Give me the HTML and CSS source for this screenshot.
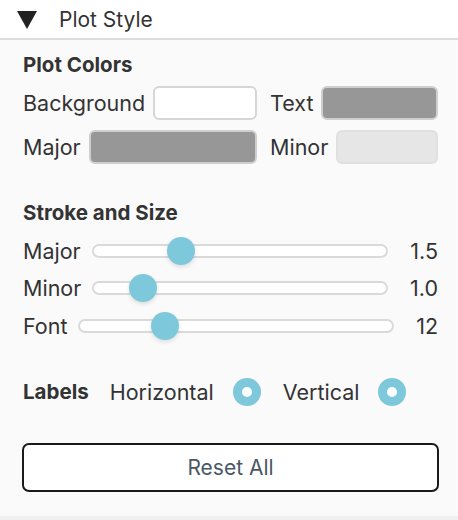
FILE: index.html
```html
<!DOCTYPE html>
<html>
<head>
<meta charset="utf-8">
<link rel="stylesheet" href="styles.css">
</head>
<body>
<div class="header">
  <svg class="tri" width="20" height="18" viewBox="0 0 20 18"><polygon points="0,0 20,0 10,18" fill="#222"/></svg>
  <span class="title">Plot Style</span>
</div>
<div class="panel">
  <div class="section-title">Plot Colors</div>
  <div class="color-grid">
    <div class="cell"><span class="lbl">Background</span><span class="swatch white"></span></div>
    <div class="cell"><span class="lbl">Text</span><span class="swatch gray"></span></div>
    <div class="cell"><span class="lbl">Major</span><span class="swatch gray"></span></div>
    <div class="cell"><span class="lbl">Minor</span><span class="swatch light"></span></div>
  </div>

  <div class="section-title st2">Stroke and Size</div>
  <div class="sliders">
    <div class="slider-row">
      <span class="lbl">Major</span>
      <div class="track"><span class="thumb" style="left:30%"></span></div>
      <span class="val">1.5</span>
    </div>
    <div class="slider-row">
      <span class="lbl">Minor</span>
      <div class="track"><span class="thumb" style="left:16.8%"></span></div>
      <span class="val">1.0</span>
    </div>
    <div class="slider-row">
      <span class="lbl">Font</span>
      <div class="track"><span class="thumb" style="left:27.2%"></span></div>
      <span class="val">12</span>
    </div>
  </div>

  <div class="labels-row">
    <span class="bold">Labels</span>
    <span class="lbl h">Horizontal</span>
    <span class="radio"></span>
    <span class="lbl v">Vertical</span>
    <span class="radio"></span>
  </div>

  <button class="reset">Reset All</button>
</div>
</body>
</html>
```
FILE: styles.css
```css
html, body { margin: 0; padding: 0; }
body {
  width: 458px;
  height: 520px;
  background: #f0f0f0;
  font-family: Inter, "Noto Sans", sans-serif;
  color: #333;
  overflow: hidden;
}
.header {
  height: 38px;
  background: #fff;
  border-bottom: 2px solid #dcdcdc;
  display: flex;
  align-items: center;
}
.tri { margin-left: 17px; margin-top: 2px; }
.title {
  margin-left: 22px;
  font-size: 21px;
  color: #333;
}
.panel {
  background: #fafafa;
  height: 476px;
  padding: 0 20px 0 23px;
  display: flex;
  flex-direction: column;
}
.section-title {
  font-weight: 700;
  font-size: 20.5px;
  margin-top: 13px;
  line-height: 24px;
  color: #333;
}
.st2 { margin-top: 37px; }
.lbl { font-size: 21.5px; line-height: 24px; white-space: nowrap; }

.color-grid {
  display: grid;
  grid-template-columns: 234px 168px;
  column-gap: 13px;
  row-gap: 10px;
  margin-top: 9px;
}
.cell {
  display: flex;
  align-items: center;
  gap: 8px;
  height: 34px;
}
.swatch {
  display: block;
  flex: 1;
  height: 30px;
  border: 2px solid #d6d6d6;
  border-radius: 6px;
}
.white { background: #fff; }
.gray { background: #979797; border-color: #cfcfcf; }
.light { background: #e6e6e6; border-color: #e0e0e0; }

.sliders { margin-top: 7px; }
.slider-row {
  display: flex;
  align-items: center;
  height: 37.5px;
}
.track {
  flex: 1;
  position: relative;
  height: 10px;
  border: 2px solid #dadada;
  border-radius: 7px;
  background: #fff;
  margin: 0 22px 0 11px;
}
.thumb {
  position: absolute;
  top: 50%;
  width: 28px;
  height: 28px;
  margin-top: -14px;
  margin-left: -14px;
  border-radius: 50%;
  background: #7ec8dc;
  box-shadow: 0 2px 4px rgba(0,0,0,0.12);
}
.val {
  font-size: 21.5px;
}
.labels-row {
  display: flex;
  align-items: center;
  margin-top: 32px;
  height: 30px;
}
.bold { font-weight: 700; font-size: 20.5px; }
.h { margin-left: 21px; }
.v { margin-left: 22px; }
.radio {
  width: 10px;
  height: 10px;
  border: 9px solid #7ec8dc;
  border-radius: 50%;
  background: #fff;
  margin-left: 19px;
}
.reset {
  margin-top: 36px;
  width: 417px;
  height: 49px;
  margin-left: -1px;
  border: 2px solid #1a1a1a;
  border-radius: 7px;
  background: #fff;
  font-family: Inter, "Noto Sans", sans-serif;
  font-size: 21px;
  color: #4a5866;
}
```
